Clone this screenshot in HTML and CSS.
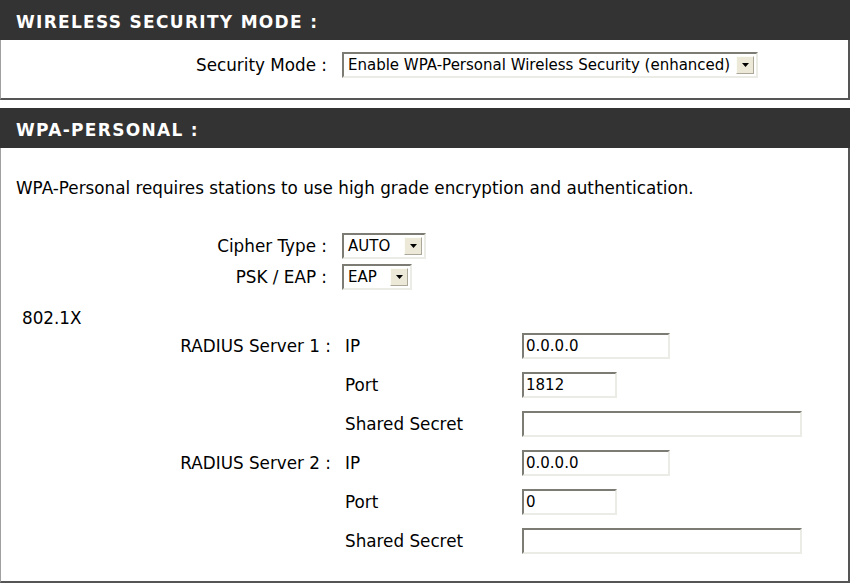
FILE: index.html
```html
<!DOCTYPE html>
<html lang="en">

<head>
    <meta charset="UTF-8" />
    <title>Wireless Security</title>
    <link rel="stylesheet" href="styles.css">
</head>

<body>
    <!-- 安全模式 -->
    <div class="section" id="mode">
        <h2 class="section-head">WIRELESS SECURITY MODE :</h2>
        <div class="section-body">
            <div class="row">
                <span class="row-label">Security Mode :</span>
                <div class="select select-mode">
                    <span class="select-value">Enable WPA-Personal Wireless Security (enhanced)</span>
                    <span class="select-btn"><svg width="7" height="4" viewBox="0 0 7 4"><path d="M0 0h7L3.5 4z" fill="#000"/></svg></span>
                </div>
            </div>
        </div>
    </div>

    <!-- WPA 个人 -->
    <div class="section" id="wpa">
        <h2 class="section-head">WPA-PERSONAL :</h2>
        <div class="section-body">
            <p class="desc">WPA-Personal requires stations to use high grade encryption and authentication.</p>

            <div class="row row-cipher">
                <span class="row-label">Cipher Type :</span>
                <div class="select select-cipher">
                    <span class="select-value">AUTO</span>
                    <span class="select-btn"><svg width="7" height="4" viewBox="0 0 7 4"><path d="M0 0h7L3.5 4z" fill="#000"/></svg></span>
                </div>
            </div>
            <div class="row row-psk">
                <span class="row-label">PSK / EAP :</span>
                <div class="select select-psk">
                    <span class="select-value">EAP</span>
                    <span class="select-btn"><svg width="7" height="4" viewBox="0 0 7 4"><path d="M0 0h7L3.5 4z" fill="#000"/></svg></span>
                </div>
            </div>

            <p class="sub-title">802.1X</p>

            <div class="radius">
                <span class="row-label">RADIUS Server 1 :</span>
                <span class="radius-name">IP</span>
                <input class="txt txt-ip" type="text" value="0.0.0.0">

                <span></span>
                <span class="radius-name">Port</span>
                <input class="txt txt-port" type="text" value="1812">

                <span></span>
                <span class="radius-name">Shared Secret</span>
                <input class="txt txt-secret" type="text" value="">

                <span class="row-label">RADIUS Server 2 :</span>
                <span class="radius-name">IP</span>
                <input class="txt txt-ip" type="text" value="0.0.0.0">

                <span></span>
                <span class="radius-name">Port</span>
                <input class="txt txt-port" type="text" value="0">

                <span></span>
                <span class="radius-name">Shared Secret</span>
                <input class="txt txt-secret" type="text" value="">
            </div>
        </div>
    </div>
</body>

</html>
```

FILE: styles.css
```css
* {
    margin: 0;
    padding: 0;
    box-sizing: border-box;
}

body {
    width: 850px;
    background-color: #fff;
    color: #000;
    font-family: "DejaVu Sans", sans-serif;
    font-size: 16.8px;
}

.section-head {
    height: 40px;
    padding: 5px 0 0 16px;
    background-color: #333;
    color: #fff;
    font: bold 17px/35px "DejaVu Sans", sans-serif;
    letter-spacing: 1.3px;
}

.section-body {
    border-left: 1px solid #a0a0a0;
    border-right: 2px solid #555;
    border-bottom: 2px solid #555;
}

#mode .section-body {
    height: 60px;
    padding-top: 12px;
}

#wpa {
    margin-top: 8px;
}

#wpa .section-body {
    height: 435px;
    padding-top: 30px;
}

.row {
    display: flex;
    align-items: center;
}

.row-label {
    width: 326px;
    text-align: right;
    white-space: nowrap;
}

/* 下拉框 */
.select {
    display: flex;
    align-items: center;
    justify-content: space-between;
    height: 26px;
    margin-left: 15px;
    padding: 0 2px 0 4px;
    border: 2px solid;
    border-color: #7c7c74 #ecece6 #ecece6 #7c7c74;
    background-color: #fff;
    font-size: 15px;
}

.select-btn {
    display: flex;
    align-items: center;
    justify-content: center;
    width: 18px;
    height: 18px;
    border: 1px solid;
    border-color: #fdfdf8 #aca899 #aca899 #fdfdf8;
    background-color: #ece9d8;
}

.select-mode {
    width: 416px;
}

.select-cipher {
    width: 84px;
}

.select-psk {
    width: 70px;
}

.desc {
    padding-left: 15px;
    line-height: 20px;
}

.row-cipher {
    margin-top: 35px;
}

.row-psk {
    margin-top: 5px;
}

.sub-title {
    margin-top: 18px;
    padding-left: 21px;
    line-height: 20px;
}

/* RADIUS 服务器 */
.radius {
    display: grid;
    grid-template-columns: 344px 177px auto;
    row-gap: 13px;
    align-items: center;
    justify-items: start;
    margin-top: 5px;
}

.radius .row-label {
    width: 344px;
    padding-right: 14px;
}

.radius-name {
    white-space: nowrap;
}

.txt {
    height: 26px;
    padding: 0 2px;
    border: 2px solid;
    border-color: #7c7c74 #ecece6 #ecece6 #7c7c74;
    background-color: #fff;
    color: #000;
    font-family: "DejaVu Sans", sans-serif;
    font-size: 15px;
    outline: none;
}

.txt-ip {
    width: 148px;
}

.txt-port {
    width: 95px;
}

.txt-secret {
    width: 280px;
}
```
